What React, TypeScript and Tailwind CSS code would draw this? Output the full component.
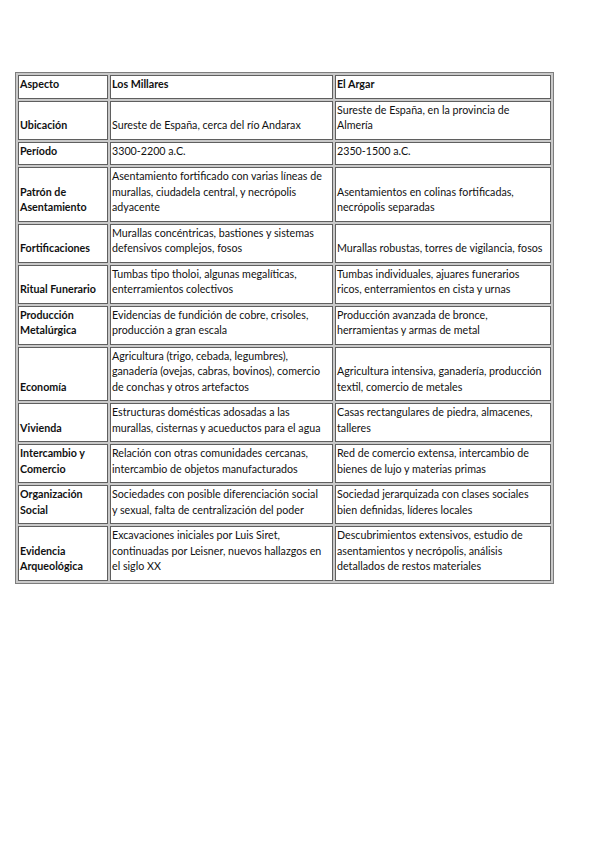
import React from "react";

type Row = {
  label: string[];
  a: string[];
  b: string[];
};

const rows: Row[] = [
  {
    label: ["Ubicación"],
    a: ["Sureste de España, cerca del río Andarax"],
    b: ["Sureste de España, en la provincia de", "Almería"],
  },
  { label: ["Período"], a: ["3300-2200 a.C."], b: ["2350-1500 a.C."] },
  {
    label: ["Patrón de", "Asentamiento"],
    a: [
      "Asentamiento fortificado con varias líneas de",
      "murallas, ciudadela central, y necrópolis",
      "adyacente",
    ],
    b: ["Asentamientos en colinas fortificadas,", "necrópolis separadas"],
  },
  {
    label: ["Fortificaciones"],
    a: ["Murallas concéntricas, bastiones y sistemas", "defensivos complejos, fosos"],
    b: ["Murallas robustas, torres de vigilancia, fosos"],
  },
  {
    label: ["Ritual Funerario"],
    a: ["Tumbas tipo tholoi, algunas megalíticas,", "enterramientos colectivos"],
    b: ["Tumbas individuales, ajuares funerarios", "ricos, enterramientos en cista y urnas"],
  },
  {
    label: ["Producción", "Metalúrgica"],
    a: ["Evidencias de fundición de cobre, crisoles,", "producción a gran escala"],
    b: ["Producción avanzada de bronce,", "herramientas y armas de metal"],
  },
  {
    label: ["Economía"],
    a: [
      "Agricultura (trigo, cebada, legumbres),",
      "ganadería (ovejas, cabras, bovinos), comercio",
      "de conchas y otros artefactos",
    ],
    b: ["Agricultura intensiva, ganadería, producción", "textil, comercio de metales"],
  },
  {
    label: ["Vivienda"],
    a: ["Estructuras domésticas adosadas a las", "murallas, cisternas y acueductos para el agua"],
    b: ["Casas rectangulares de piedra, almacenes,", "talleres"],
  },
  {
    label: ["Intercambio y", "Comercio"],
    a: ["Relación con otras comunidades cercanas,", "intercambio de objetos manufacturados"],
    b: ["Red de comercio extensa, intercambio de", "bienes de lujo y materias primas"],
  },
  {
    label: ["Organización", "Social"],
    a: ["Sociedades con posible diferenciación social", "y sexual, falta de centralización del poder"],
    b: ["Sociedad jerarquizada con clases sociales", "bien definidas, líderes locales"],
  },
  {
    label: ["Evidencia", "Arqueológica"],
    a: [
      "Excavaciones iniciales por Luis Siret,",
      "continuadas por Leisner, nuevos hallazgos en",
      "el siglo XX",
    ],
    b: [
      "Descubrimientos extensivos, estudio de",
      "asentamientos y necrópolis, análisis",
      "detallados de restos materiales",
    ],
  },
];

function Lines({ lines }: { lines: string[] }) {
  return (
    <>
      {lines.map((l, i) => (
        <div key={i} className="whitespace-nowrap">
          {l}
        </div>
      ))}
    </>
  );
}

const cell =
  "border border-[#5f5f5f] align-bottom px-[1px] pt-0 pb-[6px] text-left";

export default function App() {
  return (
    <div className="min-h-[848px] bg-white pt-[72px] pl-[15px] font-['Lato',sans-serif] text-[10.7px] leading-[15.5px] text-[#111]">
      <table className="w-[539px] table-fixed border-separate border-spacing-[2px] border border-[#7d7d7d] bg-[#c9c9c9]">
        <colgroup>
          <col className="w-[90px]" />
          <col className="w-[223px]" />
          <col />
        </colgroup>
        <thead>
          <tr>
            <th className={`${cell} bg-white font-bold`}>Aspecto</th>
            <th className={`${cell} bg-white font-bold`}>Los Millares</th>
            <th className={`${cell} bg-white font-bold`}>El Argar</th>
          </tr>
        </thead>
        <tbody>
          {rows.map((r, i) => (
            <tr key={i}>
              <td className={`${cell} bg-white font-bold`}>
                <Lines lines={r.label} />
              </td>
              <td className={`${cell} bg-white`}>
                <Lines lines={r.a} />
              </td>
              <td className={`${cell} bg-white`}>
                <Lines lines={r.b} />
              </td>
            </tr>
          ))}
        </tbody>
      </table>
    </div>
  );
}
